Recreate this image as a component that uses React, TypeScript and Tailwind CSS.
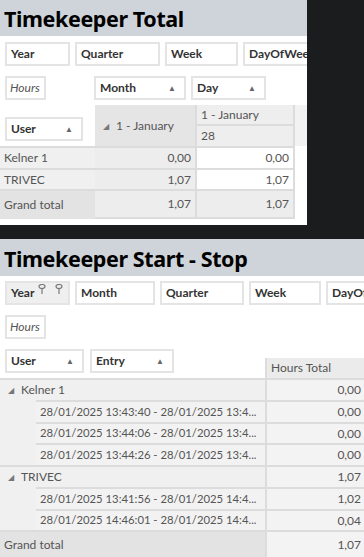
import React from "react";

const font = { fontFamily: 'Lato, "Open Sans", sans-serif' };
const titleFont = { fontFamily: '"Noto Sans", "Open Sans", sans-serif' };

const SortArrow = () => (
  <span className="text-[8px] text-[#666] leading-none">▲</span>
);

const Expand = () => (
  <span className="text-[8px] text-[#777] leading-none mr-[7px]">◢</span>
);

const Field = ({
  label,
  width,
  sort,
  grey,
  children,
}: {
  label: string;
  width: string;
  sort?: boolean;
  grey?: boolean;
  children?: React.ReactNode;
}) => (
  <div
    className={`${width} h-[24px] shrink-0 border-2 border-[#e4e4e4] flex items-center justify-between pl-[4px] pr-[8px] overflow-hidden whitespace-nowrap ${
      grey ? "bg-[#efefef]" : "bg-white"
    }`}
  >
    <span className="flex items-center text-[12px] font-bold text-[#333]">
      {label}
      {children}
    </span>
    {sort && <SortArrow />}
  </div>
);

const HoursBox = () => (
  <div className="w-[41px] h-[24px] border-2 border-[#e4e4e4] flex items-center pl-[3px] text-[12px] italic text-[#555]">
    Hours
  </div>
);

const Pin = ({ gap }: { gap: string }) => (
  <svg width="8" height="10" viewBox="0 0 8 10" className={`${gap} -mt-[8px]`}>
    <ellipse cx="4" cy="2.5" rx="3" ry="2" fill="none" stroke="#777" strokeWidth="1.2" />
    <line x1="4" y1="4.5" x2="4" y2="10" stroke="#777" strokeWidth="1.2" />
  </svg>
);

const Title = ({ text, h }: { text: string; h: string }) => (
  <div className={`${h} bg-[#ced4da] flex items-center pl-[4px]`} style={titleFont}>
    <span className="text-[21.5px] font-bold text-black leading-none tracking-[-0.4px] pt-[2px]">
      {text}
    </span>
  </div>
);

const TopPivot = () => {
  const rows = [
    { label: "Kelner 1", a: "0,00", b: "0,00", h: "h-[22px]" },
    { label: "TRIVEC", a: "1,07", b: "1,07", h: "h-[21px]" },
  ];
  return (
    <div className="text-[12px] text-[#555] whitespace-nowrap">
      <div className="flex h-[41px]">
        <div className="w-[95px] bg-white pl-[5px] pt-[12px]">
          <Field label="User" width="w-[78px]" sort />
        </div>
        <div className="w-[102px] bg-[#e5e5e5] border-r-2 border-[#dcdcdc] flex items-center pl-[8px]">
          <Expand />1 - January
        </div>
        <div className="w-[98px] bg-[#eeeeee] border-r-2 border-[#dcdcdc] flex flex-col">
          <div className="h-[21px] border-b-2 border-[#dcdcdc] flex items-center pl-[4px]">
            1 - January
          </div>
          <div className="flex-1 flex items-center pl-[4px]">28</div>
        </div>
        <div className="w-[12px] bg-[#f2f2f2]" />
      </div>
      {rows.map((r) => (
        <div key={r.label} className={`flex ${r.h}`}>
          <div className="w-[95px] bg-[#f0f0f0] border-t-2 border-[#dcdcdc] flex items-center pl-[4px]">
            {r.label}
          </div>
          <div className="w-[102px] bg-[#ededed] border-t-2 border-r-2 border-[#dcdcdc] flex items-center justify-end pr-[4px]">
            {r.a}
          </div>
          <div className="w-[98px] bg-white border-t-2 border-r-2 border-[#dcdcdc] flex items-center justify-end pr-[4px]">
            {r.b}
          </div>
        </div>
      ))}
      <div className="flex h-[30px]">
        <div className="w-[95px] bg-[#e3e3e3] border-t-2 border-[#dcdcdc] flex items-center pl-[4px]">
          Grand total
        </div>
        <div className="w-[102px] bg-[#ededed] border-t-2 border-r-2 border-b-2 border-[#dcdcdc] flex items-center justify-end pr-[4px]">
          1,07
        </div>
        <div className="w-[98px] bg-[#ededed] border-t-2 border-r-2 border-b-2 border-[#dcdcdc] flex items-center justify-end pr-[4px]">
          1,07
        </div>
      </div>
    </div>
  );
};

const bottomRows = [
  { label: "Kelner 1", value: "0,00", level: 0, h: "h-[22px]" },
  { label: "28/01/2025 13:43:40 - 28/01/2025 13:4...", value: "0,00", level: 1, h: "h-[22px]" },
  { label: "28/01/2025 13:44:06 - 28/01/2025 13:4...", value: "0,00", level: 1, h: "h-[21px]" },
  { label: "28/01/2025 13:44:26 - 28/01/2025 13:4...", value: "0,00", level: 1, h: "h-[22px]" },
  { label: "TRIVEC", value: "1,07", level: 0, h: "h-[22px]" },
  { label: "28/01/2025 13:41:56 - 28/01/2025 14:4...", value: "1,02", level: 1, h: "h-[22px]" },
  { label: "28/01/2025 14:46:01 - 28/01/2025 14:4...", value: "0,04", level: 1, h: "h-[21px]" },
];

const BottomPivot = () => (
  <div className="text-[12px] text-[#555] whitespace-nowrap">
    <div className="flex h-[29px]">
      <div className="flex-1 flex gap-[6px] pl-[5px]">
        <Field label="User" width="w-[79px]" sort />
        <Field label="Entry" width="w-[84px]" sort />
      </div>
      <div className="w-[99px] mt-[9px] bg-[#ebebeb] border-l-2 border-[#dcdcdc] flex items-end pl-[4px] pb-[1px]">
        Hours Total
      </div>
    </div>
    {bottomRows.map((r, i) => (
      <div key={i} className={`flex ${r.h} bg-[#f0f0f0]`}>
        <div className={`flex-1 flex overflow-hidden ${r.level ? "pl-[36px]" : ""}`}>
          <div
            className={`flex-1 flex items-center border-t-2 border-[#dcdcdc] ${
              r.level ? "pl-[4px] bg-[#f2f2f2] text-[11.3px]" : "pl-[8px]"
            }`}
          >
            {r.level === 0 && <Expand />}
            {r.label}
          </div>
        </div>
        <div className="w-[99px] border-t-2 border-l-2 border-[#dcdcdc] bg-[#f3f3f3] flex items-center justify-end pr-[3px]">
          {r.value}
        </div>
      </div>
    ))}
    <div className="flex h-[27px]">
      <div className="flex-1 bg-[#e3e3e3] border-t-2 border-[#dcdcdc] flex items-center pl-[4px]">
        Grand total
      </div>
      <div className="w-[99px] bg-[#f3f3f3] border-t-2 border-l-2 border-[#dcdcdc] flex items-center justify-end pr-[3px]">
        1,07
      </div>
    </div>
  </div>
);

export default function App() {
  return (
    <div className="w-[364px] h-[557px] bg-[#1b1c1e] overflow-hidden" style={font}>
      <div className="w-[307px] h-[225px] bg-white overflow-hidden">
        <Title text="Timekeeper Total" h="h-[36px]" />
        <div className="flex gap-[5px] pl-[5px] mt-[6px] overflow-hidden">
          <Field label="Year" width="w-[65px]" />
          <Field label="Quarter" width="w-[85px]" />
          <Field label="Week" width="w-[73px]" />
          <Field label="DayOfWeek" width="w-[90px]" />
        </div>
        <div className="flex pl-[5px] mt-[10px]">
          <HoursBox />
          <div className="ml-[48px] flex gap-[5px]">
            <Field label="Month" width="w-[92px]" sort />
            <Field label="Day" width="w-[75px]" sort />
          </div>
        </div>
        <div className="mt-[5px]">
          <TopPivot />
        </div>
      </div>
      <div className="mt-[14px] h-[318px] bg-white overflow-hidden">
        <Title text="Timekeeper Start - Stop" h="h-[37px]" />
        <div className="flex gap-[5px] pl-[5px] mt-[5px] overflow-hidden">
          <Field label="Year" width="w-[65px]" grey>
            <Pin gap="ml-[4px]" />
            <Pin gap="ml-[9px]" />
          </Field>
          <Field label="Month" width="w-[80px]" />
          <Field label="Quarter" width="w-[84px]" />
          <Field label="Week" width="w-[72px]" />
          <Field label="DayOfWeek" width="w-[90px]" />
        </div>
        <div className="pl-[5px] mt-[10px]">
          <HoursBox />
        </div>
        <div className="mt-[10px]">
          <BottomPivot />
        </div>
      </div>
    </div>
  );
}
